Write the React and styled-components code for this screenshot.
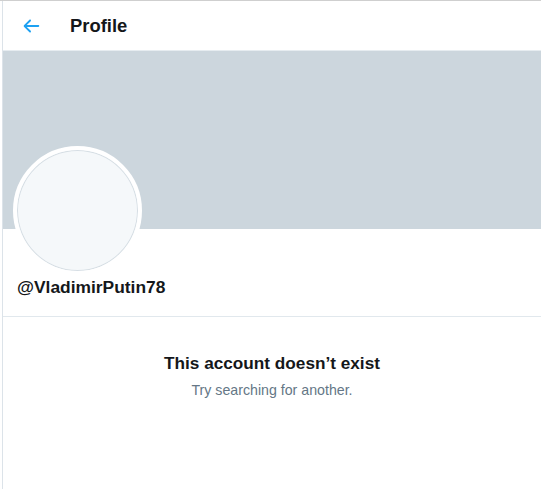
import React from 'react';
import styled, { createGlobalStyle } from 'styled-components';

const GlobalStyle = createGlobalStyle`
  html, body {
    margin: 0;
    padding: 0;
    background: #FFFFFF;
    font-family: "Liberation Sans", Arial, sans-serif;
  }
`;

const Page = styled.div`
  border-top: 1px solid #CFCFCF;
  min-height: 488px;
  padding-left: 2px;
`;

const Column = styled.main`
  border-left: 1px solid #DCE3E9;
  min-height: 488px;
`;

const Header = styled.header`
  display: flex;
  align-items: center;
  height: 49px;
  padding-left: 16px;
  border-bottom: 1px solid #E6ECF0;
`;

const BackButton = styled.button`
  display: flex;
  align-items: center;
  justify-content: center;
  width: 24px;
  height: 24px;
  padding: 0;
  border: none;
  background: none;
  color: #1DA1F2;
  cursor: pointer;

  svg {
    width: 22px;
    height: 22px;
    fill: currentColor;
  }
`;

const Title = styled.h2`
  margin: 0 0 0 27px;
  font-size: 18.4px;
  font-weight: 700;
  color: #14171A;
`;

const Banner = styled.div`
  height: 178px;
  background: #CCD6DD;
`;

const ProfileInfo = styled.div`
  padding: 0 15px 0 10px;
  border-bottom: 1px solid #E1E8ED;
`;

const Avatar = styled.div`
  width: 121px;
  height: 121px;
  margin-top: -83px;
  border-radius: 50%;
  border: 4px solid #FFFFFF;
  background: #F5F8FA;
  box-shadow: inset 0 0 0 1px #D6DEE4;
`;

const Handle = styled.div`
  margin: 2px 0 0 4px;
  padding-bottom: 18px;
  font-size: 17.4px;
  font-weight: 700;
  color: #14171A;
`;

const EmptyState = styled.section`
  display: flex;
  flex-direction: column;
  align-items: center;
  padding-top: 36px;
`;

const EmptyTitle = styled.h3`
  margin: 0;
  font-size: 17.2px;
  font-weight: 700;
  color: #14171A;
`;

const EmptyText = styled.p`
  margin: 8px 0 0;
  font-size: 14.2px;
  color: #657786;
`;

const BackArrow = () => (
  <svg viewBox="0 0 24 24" aria-hidden="true">
    <path d="M20 11H7.414l4.293-4.293c.39-.39.39-1.023 0-1.414s-1.023-.39-1.414 0l-6 6c-.39.39-.39 1.023 0 1.414l6 6c.195.195.45.293.707.293s.512-.098.707-.293c.39-.39.39-1.023 0-1.414L7.414 13H20c.553 0 1-.447 1-1s-.447-1-1-1z" />
  </svg>
);

const App = () => {
  return (
    <>
      <GlobalStyle />
      <Page>
        <Column>
          <Header>
            <BackButton aria-label="Back">
              <BackArrow />
            </BackButton>
            <Title>Profile</Title>
          </Header>
          <Banner />
          <ProfileInfo>
            <Avatar />
            <Handle>@VladimirPutin78</Handle>
          </ProfileInfo>
          <EmptyState>
            <EmptyTitle>This account doesn’t exist</EmptyTitle>
            <EmptyText>Try searching for another.</EmptyText>
          </EmptyState>
        </Column>
      </Page>
    </>
  );
};

export default App;
